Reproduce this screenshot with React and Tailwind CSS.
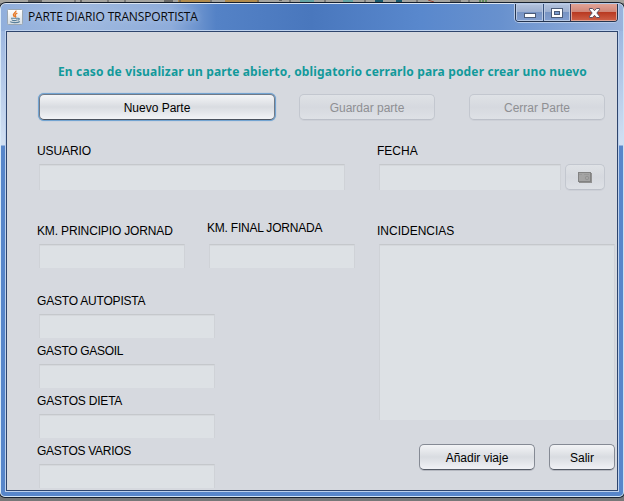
import React from "react";

const ARIAL = "font-['Liberation_Sans',Arial,sans-serif]";

function Label({ children, className = "" }) {
  return (
    <div className={`h-[14px] whitespace-nowrap text-[12px] leading-[14px] text-black ${className}`}>
      {children}
    </div>
  );
}

function Field({ className = "" }) {
  return (
    <div
      className={`shrink-0 border-t border-l border-r border-t-[#c5c8cc] border-l-[#cfd2d7] border-r-[#cfd2d7] bg-[#dde1e5] shadow-[inset_0_1px_0_#d5d8dc] ${className}`}
    />
  );
}

function Button({ children, className = "", disabled = false, focused = false }) {
  const look = disabled
    ? "border-[#c3c7cf] border-b-[#bcc0c9] bg-linear-to-b from-[#dfe2e6] via-[#d6d9df] to-[#dee1e6] text-[#8e8f93] shadow-[0_1px_0_#cdd0d7]"
    : focused
      ? "border-[#707987] border-b-[#4c535f] bg-linear-to-b from-[#f4f5f7] via-[#d9dce1] to-[#f3f4f7] text-black shadow-[0_0_0_1px_#73a4d1,0_0_1px_1px_#73a4d1]"
      : "border-[#858a94] border-b-[#555b66] bg-linear-to-b from-[#f3f4f6] via-[#d9dce1] to-[#f1f2f6] text-black shadow-[0_1px_0_#b5b8c0]";
  return (
    <button
      type="button"
      disabled={disabled}
      className={`flex h-[26px] shrink-0 items-center justify-center rounded-[5px] border pt-px text-[12px] leading-[14px] ${look} ${className}`}
    >
      {children}
    </button>
  );
}

function JavaIcon() {
  return (
    <svg className="shrink-0" width="16" height="16" viewBox="0 0 16 16">
      <defs>
        <linearGradient id="tile" x1="0" y1="0" x2="0" y2="1">
          <stop offset="0" stopColor="#ffffff" />
          <stop offset="1" stopColor="#d6dde2" />
        </linearGradient>
      </defs>
      <rect x=".5" y=".5" width="15" height="15" rx="1" fill="url(#tile)" stroke="#9ba7b2" />
      <path d="M8.8 1.6c1 1.8-3.6 2.8-2.2 5l1 1.3M10.3 4.1C8.4 5 7.5 5.8 8.6 7.2c.4.6 0 1-.4 1.3" fill="none" stroke="#e67726" strokeWidth="1.4" />
      <path d="M4 9.3h6.8M4.8 10.5c.2 1.5 4.6 1.5 5.5 0M10.8 9.3c2.2-.4 1.9 1.7-.2 2M3.2 12.7c1 1.3 8 1.3 9.6-.2" fill="none" stroke="#587f9b" strokeWidth="1.1" />
    </svg>
  );
}

function WindowControls() {
  return (
    <div className="mr-[5px] flex h-[18px] w-[103px] shrink-0 overflow-hidden rounded-b-[4px] border border-t-0 border-[#24344f] shadow-[0_0_0_1px_#b7cae8]">
      <div className="flex w-[28px] items-center justify-center border-r border-[#37517d] bg-[linear-gradient(180deg,#b3c2dc_0%,#9db0d1_45%,#7894c4_50%,#829fd0_100%)] shadow-[inset_0_0_0_1px_#b9c9e3]">
        <svg width="14" height="12" viewBox="0 0 14 12">
          <rect x="1.5" y="6.5" width="11" height="4" fill="#fff" stroke="#4b5b78" />
        </svg>
      </div>
      <div className="flex w-[27px] items-center justify-center border-r border-[#413552] bg-[linear-gradient(180deg,#b3c2dc_0%,#9db0d1_45%,#7894c4_50%,#829fd0_100%)] shadow-[inset_0_0_0_1px_#b9c9e3]">
        <svg width="12" height="12" viewBox="0 0 12 12">
          <rect x=".5" y="1.5" width="11" height="9" fill="#fff" stroke="#4b5b78" />
          <rect x="3.5" y="4.5" width="5" height="3" fill="#7899cb" stroke="#4b5b78" />
        </svg>
      </div>
      <div className="flex flex-1 items-center justify-center bg-[linear-gradient(180deg,#e2a396_0%,#d08779_45%,#b93a22_50%,#cf6148_100%)] shadow-[inset_0_0_0_1px_#dfa293]">
        <svg width="13" height="12" viewBox="0 0 13 12">
          <path d="M1.5 1.5h3l2 2.2 2-2.2h3v1.3L8.8 6l2.7 3.2v1.3h-3l-2-2.2-2 2.2h-3V9.2L4.2 6 1.5 2.8z" fill="#fff" stroke="#5c5062" />
        </svg>
      </div>
    </div>
  );
}

function DesktopStrip() {
  return (
    <div className="h-[3px] shrink-0 overflow-hidden bg-[#a5a49f]">
      <svg width="624" height="3" viewBox="0 0 624 3">
        <path d="M28 1h14M80 1h2M164 1h9M203 0h3M279 0h3" stroke="#303030" />
        <path d="M178 1h32M225 1h34" stroke="#b28b4b" strokeWidth="2" />
        <path d="M300 1h14M343 1h10" stroke="#65a5a4" strokeWidth="2" />
        <path d="M75 0v3M108 0v3M125 0v3M180 0v3M211 0v3M258 0v3M290 0v3M325 0v3M365 0v3M417 0v3M469 0v3" stroke="#555" />
        <path d="M375 1h8M396 1h6" stroke="#1a596b" strokeWidth="2" />
        <path d="M428 0l6 2" stroke="#a14c3c" />
        <path d="M450 1h11" stroke="#464646" />
        <path d="M480 0v3M483 0v3M486 0v3" stroke="#20751e" />
      </svg>
    </div>
  );
}

const EXPENSES = [
  { name: "GASTO AUTOPISTA", tracking: "tracking-[-0.2px]" },
  { name: "GASTO GASOIL", tracking: "tracking-[-0.3px]" },
  { name: "GASTOS DIETA", tracking: "tracking-[-0.2px]" },
  { name: "GASTOS VARIOS", tracking: "tracking-[-0.27px]" },
];

export default function App() {
  return (
    <div className={`flex h-[501px] w-[624px] flex-col overflow-hidden bg-[#777879] ${ARIAL}`}>
      <DesktopStrip />
      <div className="flex h-[494px] shrink-0 flex-col rounded-t-[6px] rounded-b-[5px] border-t border-r border-b border-l border-t-[#dbe5f2] border-r-[#c9e2f5] border-b-[#d2e5f7] border-l-[#d8e9f8] bg-linear-to-b from-[#91aedc] from-0% via-[#d2e0f2] via-[141px] to-[#5786ca] to-[142px] shadow-[0_0_0_1px_#16202e]">
        <header className="flex h-[27px] shrink-0 justify-between rounded-t-[5px] bg-[linear-gradient(90deg,#91afdc_0px,#9fb9df_80px,#8eacda_170px,#5482c6_215px,#4977bd_310px,#5988cd_420px,#6891ce_500px,#9ab3dc_623px)]">
          <div className="flex items-start gap-[5px] pt-[5px] pl-[6px]">
            <JavaIcon />
            <h1 className="h-[16px] w-[174px] whitespace-nowrap font-['Open_Sans','Noto_Sans',sans-serif] text-[12px] leading-[16px] font-normal tracking-[-0.14px] text-[#08090d] [text-shadow:0_0_6px_#c1d2eb]">
              PARTE DIARIO TRANSPORTISTA
            </h1>
          </div>
          <WindowControls />
        </header>
        <main className="mr-[5px] ml-[5px] h-[460px] shrink-0 border border-[#2e456d] bg-[#d6d9df] shadow-[0_0_0_1px_#bdd1ed]">
          <div className="flex h-[62px] items-start pt-[32px] pl-[51px]">
            <p className="whitespace-nowrap font-['Noto_Sans',sans-serif] text-[12px] leading-[16px] font-bold tracking-[0.15px] text-[#12999b]">
              En caso de visualizar un parte abierto, obligatorio cerrarlo para poder crear uno nuevo
            </p>
          </div>
          <div className="ml-[32px] flex h-[26px]">
            <Button focused className="w-[236px]">Nuevo Parte</Button>
            <Button disabled className="ml-[24px] w-[136px]">Guardar parte</Button>
            <Button disabled className="ml-[34px] w-[136px]">Cerrar Parte</Button>
          </div>
          <div className="mt-[24px] ml-[30px] flex h-[46px]">
            <div className="w-[340px]">
              <Label className="tracking-[-0.1px]">USUARIO</Label>
              <Field className="mt-[6px] ml-[2px] h-[26px] w-[306px]" />
            </div>
            <div>
              <Label>FECHA</Label>
              <div className="mt-[6px] ml-[2px] flex gap-[4px]">
                <Field className="h-[26px] w-[182px]" />
                <Button disabled className="w-[40px]">
                  <svg width="14" height="11" viewBox="0 0 14 11">
                    <path d="M1 1h13v10H1z" fill="#919191" />
                    <rect x=".5" y=".5" width="12" height="9" fill="#a4a4a4" stroke="#828282" />
                    <path d="M1 2.5h3M6 2.5h5" stroke="#999" />
                    <circle cx="9" cy="6" r="1.7" fill="none" stroke="#939393" />
                  </svg>
                </Button>
              </div>
            </div>
          </div>
          <div className="mt-[31px] ml-[30px] flex">
            <div className="w-[340px]">
              <div className="flex h-[47px]">
                <div className="w-[170px] pt-[3px]">
                  <Label className="tracking-[-0.15px]">KM. PRINCIPIO JORNAD</Label>
                  <Field className="mt-[6px] ml-[2px] h-[24px] w-[146px]" />
                </div>
                <div>
                  <Label className="tracking-[-0.22px]">KM. FINAL JORNADA</Label>
                  <Field className="mt-[9px] ml-[2px] h-[24px] w-[146px]" />
                </div>
              </div>
              <div className="mt-[26px] flex flex-col gap-[6px]">
                {EXPENSES.map(({ name, tracking }) => (
                  <div key={name}>
                    <Label className={tracking}>{name}</Label>
                    <Field className="mt-[6px] ml-[2px] h-[24px] w-[176px]" />
                  </div>
                ))}
              </div>
            </div>
            <div className="w-[238px] pt-[3px]">
              <Label>INCIDENCIAS</Label>
              <Field className="mt-[6px] ml-[2px] h-[176px] w-[236px]" />
              <div className="mt-[24px] flex justify-end gap-[14px]">
                <Button className="w-[116px]">Añadir viaje</Button>
                <Button className="w-[66px]">Salir</Button>
              </div>
            </div>
          </div>
        </main>
      </div>
    </div>
  );
}
